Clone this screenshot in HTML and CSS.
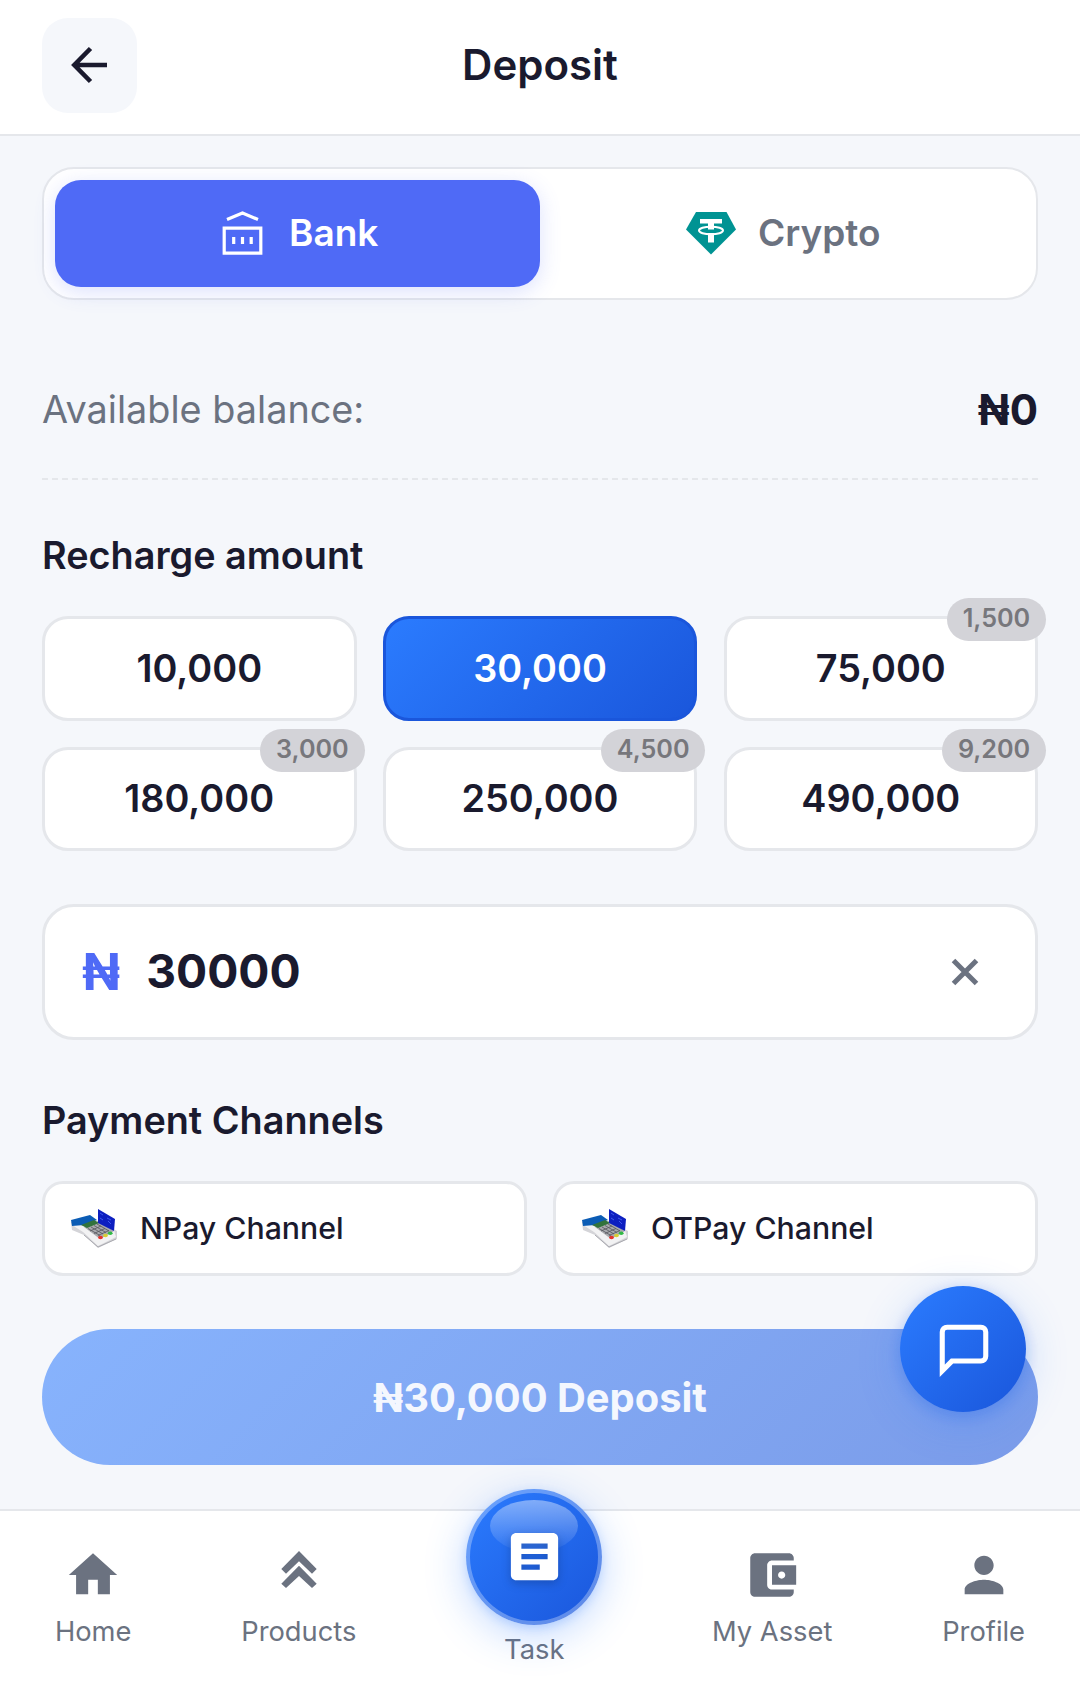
FILE: index.html
```html
<!DOCTYPE html>
<html lang="en">
<head>
    <meta charset="utf-8">
    <meta name="viewport" content="width=device-width, initial-scale=1">
    <title>Deposit</title>
    <link rel="stylesheet" href="styles.css">
</head>
<body>
    <header class="header">
        <button type="button" class="back-btn" aria-label="Back">
            <svg width="46" height="46" viewBox="0 0 46 46" fill="none" stroke="#1a1a2e" stroke-width="4.600">
                <path d="M40 23H8M23.500 6.500L7.300 23l16.200 16.500"/>
            </svg>
        </button>
        <h1 class="header-title">Deposit</h1>
    </header>

    <main class="content">
        <div class="tabs">
            <button type="button" class="tab active">
                <svg class="tab-icon" viewBox="0 0 52 52" fill="none" stroke="#fff" stroke-width="3.200">
                    <path d="M11 12.500L26.500 6 42 12.500"/>
                    <path d="M8.200 21.200h36.600v25H8.200z"/>
                    <path d="M17.700 30v7M26.500 30v7M35.200 30v7"/>
                </svg>
                <span class="tab-label">Bank</span>
            </button>
            <button type="button" class="tab">
                <svg class="tab-icon" viewBox="0 0 52 52">
                    <path d="M11 5h30.500L51 22.500 26 47.500 1 22.500z" fill="#009393"/>
                    <path d="M15 12h22v4.500h-8V20h-6v-3.500h-8zM23 26h6v9.500h-6z" fill="#fff"/>
                    <path d="M23 19h6v3.500h-6z" fill="#fff"/>
                    <ellipse cx="26" cy="23.500" rx="12" ry="3.800" fill="none" stroke="#fff" stroke-width="2"/>
                </svg>
                <span class="tab-label">Crypto</span>
            </button>
        </div>

        <div class="balance">
            <span class="balance-label">Available balance:</span>
            <span class="balance-value">₦0</span>
        </div>

        <h2 class="section-title">Recharge amount</h2>
        <div class="amounts">
            <button type="button" class="amount">10,000</button>
            <button type="button" class="amount selected">30,000</button>
            <button type="button" class="amount">75,000<span class="bonus">1,500</span></button>
            <button type="button" class="amount">180,000<span class="bonus">3,000</span></button>
            <button type="button" class="amount">250,000<span class="bonus">4,500</span></button>
            <button type="button" class="amount">490,000<span class="bonus">9,200</span></button>
        </div>

        <div class="amount-input">
            <span class="currency">₦</span>
            <input type="text" class="amount-field" id="amount" value="30000" aria-label="Amount">
            <button type="button" class="clear-btn" id="clear-btn" aria-label="Clear">
                <svg width="28" height="28" viewBox="0 0 28 28" stroke="#6b7280" stroke-width="5">
                    <path d="M2.500 2.500l23 23M25.500 2.500l-23 23"/>
                </svg>
            </button>
        </div>

        <h2 class="section-title channels-title">Payment Channels</h2>
        <!-- card terminal, shared by both channels -->
        <svg class="defs">
            <symbol id="terminal" viewBox="0 0 48 40">
                <path d="M1 14l1 8 12 5 14 13 19-9v-8L22 10z" fill="#d4d4d8"/>
                <path d="M2 17l11 7 15 14 18-9-2-7L21 9 4 14z" fill="#f2f2f3"/>
                <path d="M14 19l14-6 16 10-14 8z" fill="#a9aaae"/>
                <path d="M1 12l19-5 7 5-13 5-12 1z" fill="#0b5cb5"/>
                <path d="M11 17l13-5 5 3-12 5z" fill="#32733c"/>
                <path d="M18 20.500l12 7M21 19l12 7M24 17.500l12 7M27 16l12 7M20 23l11-5M24 25.500l11-5M28 27.500l11-5" stroke="#55575d" stroke-width=".8"/>
                <path d="M28 1l17 10-1 12-16-8z" fill="#0d1fc0"/>
                <path d="M30 5l3 2m4 3l4 2M30 10l3 2m5 1l3 3" stroke="#3e58ee"/>
                <ellipse cx="30.500" cy="29.500" rx="2.400" ry="1.700" fill="#e5332b"/>
                <ellipse cx="35.500" cy="27.500" rx="2.400" ry="1.700" fill="#d8cf32"/>
                <ellipse cx="40.200" cy="25.300" rx="2.400" ry="1.700" fill="#31b945"/>
                <path d="M14 27l14 12 18-8" fill="none" stroke="#aaaab0"/>
            </symbol>
        </svg>
        <div class="channels">
            <div class="channel">
                <svg class="channel-icon"><use href="#terminal"/></svg>
                <span>NPay Channel</span>
            </div>
            <div class="channel">
                <svg class="channel-icon"><use href="#terminal"/></svg>
                <span>OTPay Channel</span>
            </div>
        </div>

        <button type="button" class="btn-deposit">₦30,000 Deposit</button>
    </main>

    <button type="button" class="chat-btn" aria-label="Chat">
        <svg width="58" height="58" viewBox="0 0 24 24" fill="none" stroke="#fff" stroke-width="2.100">
            <path d="M21 15a2 2 0 0 1-2 2H7l-4 4V5a2 2 0 0 1 2-2h14a2 2 0 0 1 2 2z"/>
        </svg>
    </button>

    <nav class="navbar">
        <a class="nav-item">
            <svg class="nav-icon" viewBox="0 0 24 24"><path d="M10 20v-6h4v6h5v-8h3L12 3 2 12h3v8z"/></svg>
            <span>Home</span>
        </a>
        <a class="nav-item">
            <svg class="nav-icon" viewBox="0 0 58 58"><path d="M29 5l17.700 18-4.700 4.700L29 15.300 16 27.700 11.300 23zM29 19.700l17.700 18-4.700 4.300L29 30 16 42l-4.700-4.300z"/></svg>
            <span>Products</span>
        </a>
        <a class="nav-item nav-task">
            <span class="task-circle">
                <svg class="task-icon" viewBox="0 0 24 24"><path d="M19 3H5c-1.100 0-2 .9-2 2v14c0 1.100.9 2 2 2h14c1.100 0 2-.9 2-2V5c0-1.100-.9-2-2-2zm-5 14H7v-2h7v2zm3-4H7v-2h10v2zm0-4H7V7h10v2z"/></svg>
            </span>
            <span>Task</span>
        </a>
        <a class="nav-item">
            <svg class="nav-icon" viewBox="0 0 24 24"><path d="M21 18v1c0 1.100-.9 2-2 2H5c-1.110 0-2-.9-2-2V5c0-1.100.89-2 2-2h14c1.100 0 2 .9 2 2v1h-9c-1.110 0-2 .9-2 2v8c0 1.100.89 2 2 2h9zm-9-2h10V8H12v8zm4-2.500c-.83 0-1.500-.67-1.500-1.500s.67-1.500 1.500-1.500 1.500.67 1.500 1.500-.67 1.500-1.500 1.500z"/></svg>
            <span>My Asset</span>
        </a>
        <a class="nav-item">
            <svg class="nav-icon" viewBox="0 0 24 24"><path d="M12 12c2.210 0 4-1.790 4-4s-1.790-4-4-4-4 1.790-4 4 1.790 4 4 4zm0 2c-2.670 0-8 1.340-8 4v2h16v-2c0-2.660-5.330-4-8-4z"/></svg>
            <span>Profile</span>
        </a>
    </nav>

    <script>
        document.getElementById('clear-btn').addEventListener('click', function() {
            document.getElementById('amount').value = '';
        });
    </script>
</body>
</html>
```
FILE: styles.css
```css
* {
    margin: 0;
    padding: 0;
    box-sizing: border-box;
    font-family: Inter, Roboto, 'Liberation Sans', sans-serif;
}

body {
    height: 1707px;
    display: flex;
    flex-direction: column;
    background: #f5f7fb;
    color: #1a1a2e;
    overflow: hidden;
}

button {
    border: none;
    background: none;
    color: inherit;
    cursor: pointer;
}

svg {
    display: block;
    flex-shrink: 0;
}

.header {
    height: 136px;
    display: grid;
    grid-template-columns: 95px 1fr 95px;
    align-items: center;
    padding: 0 42px 4px;
    background: #fff;
    border-bottom: 2px solid #e5e7eb;
}

.back-btn {
    width: 95px;
    height: 95px;
    display: flex;
    align-items: center;
    justify-content: center;
    background: #f5f7fb;
    border-radius: 26px;
}

.header-title {
    text-align: center;
    font-size: 42px;
    line-height: 50px;
    font-weight: 600;
}

.content {
    flex: 1;
    padding: 31px 42px 0;
}

.tabs {
    height: 133px;
    display: flex;
    padding: 10.5px 10.5px 11.5px;
    background: #fff;
    border: 2px solid #e5e7eb;
    border-radius: 32px;
}

.tab {
    flex: 1;
    display: flex;
    align-items: center;
    justify-content: center;
    gap: 21px;
    border-radius: 26px;
    font-size: 37px;
    font-weight: 600;
    color: #6b7280;
}

.tab.active {
    background: #4f6af6;
    color: #fff;
    box-shadow: 0 5px 21px rgba(79, 106, 246, 0.2);
}

.tab-label {
    padding-bottom: 2px;
}

.tab-icon {
    width: 52px;
    height: 52px;
}

.balance {
    height: 138px;
    margin-top: 42px;
    display: flex;
    align-items: center;
    justify-content: space-between;
    border-bottom: 2px dashed #e5e7eb;
}

.balance-label {
    padding-bottom: 2px;
    font-size: 37.8px;
    color: #6b7280;
}

.balance-value {
    font-size: 42px;
    line-height: 50px;
    font-weight: 700;
}

.section-title {
    margin-top: 51px;
    padding-bottom: 1px;
    font-size: 37.8px;
    line-height: 48px;
    font-weight: 600;
}

.amounts {
    display: grid;
    grid-template-columns: repeat(3, 1fr);
    grid-template-rows: 105px 104px;
    gap: 26px 26.25px;
    margin-top: 36px;
}

.amount {
    position: relative;
    padding-bottom: 2px;
    background: #fff;
    border: 3px solid #e5e7eb;
    border-radius: 26px;
    font-size: 37.8px;
    font-weight: 600;
}

.amount.selected {
    background: linear-gradient(135deg, #2b7cff, #1a56db) border-box;
    border-color: #1a56db;
    color: #fff;
}

.bonus {
    position: absolute;
    top: -21px;
    right: -11px;
    height: 43px;
    padding: 0 15.75px;
    border-radius: 22px;
    background: #d3d3d8;
    color: #77777c;
    font-size: 25.2px;
    line-height: 41px;
    font-weight: 600;
}

.amount-input {
    height: 136px;
    margin-top: 53px;
    display: flex;
    align-items: center;
    padding: 0 56px 2px 37px;
    background: #fff;
    border: 3px solid #e5e7eb;
    border-radius: 32px;
}

.currency {
    font-size: 50.4px;
    font-weight: 700;
    color: #4f6af6;
}

.amount-field {
    flex: 1;
    min-width: 0;
    margin-left: 26px;
    border: none;
    outline: none;
    color: inherit;
    font-size: 46.2px;
    font-weight: 700;
}

.clear-btn {
    padding-top: 2px;
}

.channels-title {
    margin-top: 56px;
}

.defs {
    position: absolute;
    width: 0;
    height: 0;
}

.channels {
    display: flex;
    gap: 26px;
    margin-top: 36px;
}

.channel {
    flex: 1;
    height: 95px;
    display: flex;
    align-items: center;
    gap: 22px;
    padding: 0 25px 2px;
    background: #fff;
    border: 3px solid #e5e7eb;
    border-radius: 21px;
    font-size: 30.24px;
    line-height: 36px;
    font-weight: 500;
}

.channel-icon {
    width: 48px;
    height: 40px;
}

.btn-deposit {
    width: 100%;
    height: 136px;
    margin-top: 53px;
    border-radius: 68px;
    background: linear-gradient(135deg, #87b3fd, #7b9ce9);
    color: #f4f7fe;
    font-size: 39.9px;
    font-weight: 700;
}

.chat-btn {
    position: fixed;
    right: 54px;
    bottom: 295px;
    width: 126px;
    height: 126px;
    display: flex;
    align-items: center;
    justify-content: center;
    padding-left: 2px;
    border-radius: 50%;
    background: linear-gradient(135deg, #2b7cff, #1a56db);
    box-shadow: 0 10px 42px rgba(43, 124, 255, 0.25), 0 4px 14px rgba(26, 86, 219, 0.25);
}

.navbar {
    height: 198px;
    display: flex;
    align-items: flex-start;
    justify-content: space-around;
    background: #fff;
    border-top: 2px solid #e5e7eb;
}

.nav-item {
    display: flex;
    flex-direction: column;
    align-items: center;
    gap: 12px;
    padding-top: 35px;
    color: #6b7280;
    font-size: 27.3px;
    line-height: 32px;
}

.nav-icon {
    width: 58px;
    height: 58px;
    fill: #6b7280;
}

.nav-task {
    gap: 9px;
    padding-top: 0;
    margin-top: -22px;
}

.task-circle {
    position: relative;
    width: 136px;
    height: 136px;
    display: flex;
    align-items: center;
    justify-content: center;
    padding-bottom: 2px;
    border: 4px solid rgba(255, 255, 255, 0.3);
    border-radius: 50%;
    background: linear-gradient(135deg, #2b7cff, #1a56db) border-box;
    box-shadow: 0 10px 42px rgba(43, 124, 255, 0.3), 0 3px 10px rgba(43, 124, 255, 0.2);
}

/* glossy highlight */
.task-circle::before {
    content: '';
    position: absolute;
    top: 7px;
    left: 20px;
    width: 88px;
    height: 52px;
    border-radius: 50%;
    background: linear-gradient(180deg, rgba(255, 255, 255, 0.42), rgba(255, 255, 255, 0.02));
}

.task-icon {
    position: relative;
    width: 63px;
    height: 63px;
    fill: #fff;
    filter: drop-shadow(0 3px 5px rgba(0, 0, 0, 0.2));
}
```
